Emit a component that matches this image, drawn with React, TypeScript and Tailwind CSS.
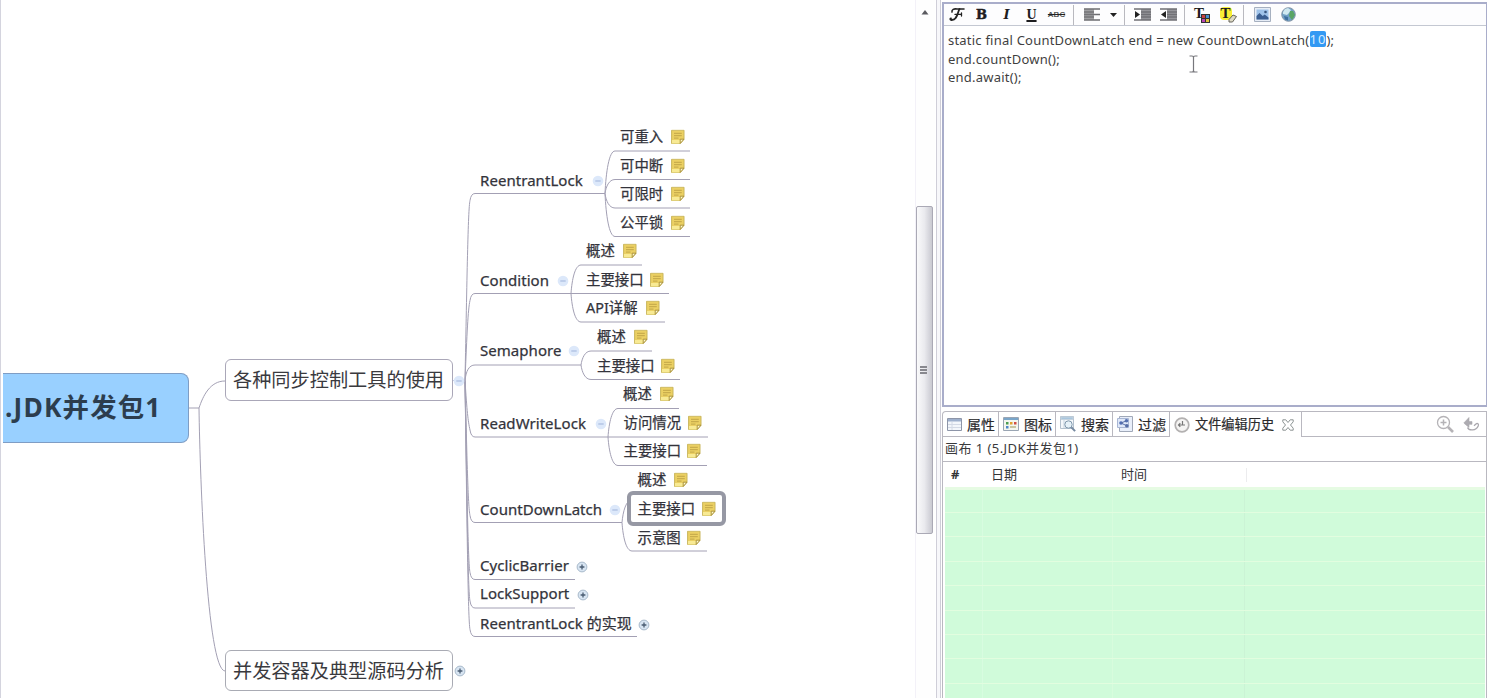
import React from "react";

const LINE = "#a3a0b4";

type Topic = {
  text: string;
  x: number;
  y: number;
  size: string;
  note?: number;
  toggle?: { x: number; open: boolean };
};

const BRANCH = "text-[15px] tracking-[0.05px]";
const LEAF = "text-[14.4px]";

const topics: Topic[] = [
  { text: "ReentrantLock", x: 480, y: 181, size: BRANCH, toggle: { x: 598, open: true } },
  { text: "可重入", x: 620, y: 138, size: LEAF, note: 671 },
  { text: "可中断", x: 620, y: 167, size: LEAF, note: 671 },
  { text: "可限时", x: 620, y: 195, size: LEAF, note: 671 },
  { text: "公平锁", x: 620, y: 224, size: LEAF, note: 671 },
  { text: "Condition", x: 480, y: 281, size: BRANCH, toggle: { x: 563, open: true } },
  { text: "概述", x: 586, y: 252, size: LEAF, note: 623 },
  { text: "主要接口", x: 586, y: 281, size: LEAF, note: 650 },
  { text: "API详解", x: 586, y: 309, size: LEAF, note: 646 },
  { text: "Semaphore", x: 480, y: 351, size: BRANCH, toggle: { x: 574, open: true } },
  { text: "概述", x: 597, y: 338, size: LEAF, note: 634 },
  { text: "主要接口", x: 597, y: 367, size: LEAF, note: 661 },
  { text: "ReadWriteLock", x: 480, y: 424, size: BRANCH, toggle: { x: 601, open: true } },
  { text: "概述", x: 623, y: 395, size: LEAF, note: 660 },
  { text: "访问情况", x: 623.5, y: 424, size: LEAF, note: 688 },
  { text: "主要接口", x: 623.5, y: 452, size: LEAF, note: 687 },
  { text: "CountDownLatch", x: 480, y: 510, size: BRANCH, toggle: { x: 615, open: true } },
  { text: "概述", x: 637.5, y: 481, size: LEAF, note: 674 },
  { text: "主要接口", x: 637.5, y: 510, size: LEAF, note: 702 },
  { text: "示意图", x: 637.5, y: 539, size: LEAF, note: 687 },
  { text: "CyclicBarrier", x: 480, y: 566, size: BRANCH, toggle: { x: 582, open: false } },
  { text: "LockSupport", x: 480, y: 594, size: BRANCH, toggle: { x: 583, open: false } },
  { text: "ReentrantLock 的实现", x: 480, y: 624, size: BRANCH, toggle: { x: 644, open: false } },
];

const trunkY = 380.5;
const branches = [
  { y: 193.5, end: 605 },
  { y: 293.5, end: 571 },
  { y: 365, end: 581 },
  { y: 437, end: 608 },
  { y: 522.5, end: 622 },
  { y: 579.5, end: 575 },
  { y: 608, end: 575 },
  { y: 636.5, end: 637 },
];
const forks = [
  { x: 605, y: 193.5, ends: [[151, 690], [179.5, 690], [208, 690], [236.5, 690]] },
  { x: 571, y: 293.5, ends: [[265, 642], [293.5, 669], [322, 665]] },
  { x: 581, y: 365, ends: [[351, 652], [379.5, 680]] },
  { x: 608, y: 437, ends: [[408.5, 679], [437, 708], [465.5, 707]] },
  { x: 622, y: 522.5, ends: [[500, 640], [551, 707]] },
];

function branchPath(y: number, end: number) {
  const gap = Math.abs(y - trunkY);
  if (gap < 30) return `M465 ${trunkY} C466 ${y + 6} 469 ${y} 475 ${y} H${end}`;
  const d = y < trunkY ? 1 : -1;
  return `M465 ${trunkY} C467 ${y + d * gap * 0.45} 468 ${y + d * 16} 470 ${y + d * 7} Q471 ${y} 475 ${y} H${end}`;
}
function forkPath(x: number, y: number, ty: number, end: number) {
  if (ty === y) return `M${x} ${y} H${end}`;
  return `M${x} ${y} C${x + 1} ${(y + ty) / 2} ${x + 4} ${ty} ${x + 10} ${ty} H${end}`;
}

function NoteIcon() {
  return (
    <svg width="14" height="15" viewBox="0 0 14 15" className="block">
      <path d="M.6.7H13v9L9.2 14H.6Z" fill="#ebd063" stroke="#c9b65c" />
      <path d="M1 10.5h8V14H1Z" fill="#f8ea94" />
      <path d="M3 3.8h7.8M3 6.2h7.8M3 8.6h4.5" stroke="#c2a648" strokeWidth="1" />
      <path d="M13 9.7H9.2V14Z" fill="#fffbd0" stroke="#a58b32" strokeWidth=".9" />
    </svg>
  );
}

function Toggle({ open }: { open: boolean }) {
  return open ? (
    <svg width="12" height="12" viewBox="0 0 12 12" className="block">
      <circle cx="6" cy="6" r="5.3" fill="#dce8fa" />
      <path d="M3.3 6h5.4" stroke="#9fb3da" />
    </svg>
  ) : (
    <svg width="12" height="12" viewBox="0 0 12 12" className="block">
      <circle cx="6" cy="6" r="4.9" fill="#d8e5f2" stroke="#a9bacb" />
      <path d="M3.6 6h4.8M6 3.6v4.8" stroke="#4a5c72" strokeWidth="1.3" />
    </svg>
  );
}

function At({ x, y, children }: { x: number; y: number; children: React.ReactNode }) {
  return (
    <div className="absolute -translate-y-1/2" style={{ left: x, top: y }}>
      {children}
    </div>
  );
}

function MindMap() {
  return (
    <main className="relative h-full w-[915px] shrink-0 overflow-hidden border-l border-[#d4d4de]">
      <div className="absolute -left-px top-0 h-full w-[915px]">
        <svg width="915" height="698" className="absolute left-0 top-0" fill="none" stroke={LINE}>
          <path d="M189 408H199M199 408C203 396 210 381 225 381M199 408C200 480 207 670 225 671" />
          <path d={`M453 ${trunkY}H465`} stroke="#c3cbe2" />
          {branches.map((b) => (
            <path key={b.y} d={branchPath(b.y, b.end)} />
          ))}
          {forks.map((f) =>
            f.ends.map(([ty, end]) => <path key={`${f.x}-${ty}`} d={forkPath(f.x, f.y, ty, end)} />)
          )}
        </svg>
        <div className="absolute left-[3px] top-[373px] flex h-[70px] w-[186px] items-center rounded-r-lg border border-l-0 border-[#7f9dc4] bg-[#99d0ff] pl-[2px] text-[26.4px] font-bold tracking-[1.15px] text-[#2c3d4e]">
          <span className="-mt-px whitespace-nowrap">.JDK并发包1</span>
        </div>
        <div className="absolute left-[225px] top-[359px] flex h-[42px] w-[228px] items-center rounded-md border border-[#aaa7b8] bg-white pl-[7px] text-[19.2px] text-[#3a3a3e]">
          <span className="whitespace-nowrap">各种同步控制工具的使用</span>
        </div>
        <div className="absolute left-[225px] top-[650px] flex h-[41px] w-[228px] items-center rounded-md border border-[#a9abb4] bg-white pl-[7px] text-[19.2px] text-[#3a3a3e]">
          <span className="mt-px whitespace-nowrap">并发容器及典型源码分析</span>
        </div>
        <At x={453} y={381}><Toggle open /></At>
        <At x={454} y={671}><Toggle open={false} /></At>
        <div className="absolute left-[627px] top-[491px] h-[35px] w-[99px] rounded-md border-4 border-[#9698a4] bg-white" />
        {topics.map((t) => (
          <React.Fragment key={`${t.x}-${t.y}`}>
            <At x={t.x} y={t.y - 1}>
              <span className={`${t.size} block whitespace-nowrap leading-5 text-[#33333b] [-webkit-text-stroke:0.25px_#33333b]`}>{t.text}</span>
            </At>
            {t.note !== undefined && <At x={t.note} y={t.y - 1}><NoteIcon /></At>}
            {t.toggle && <At x={t.toggle.x - 6} y={t.toggle.open ? t.y : t.y + 0.5}><Toggle open={t.toggle.open} /></At>}
          </React.Fragment>
        ))}
      </div>
    </main>
  );
}

function ScrollBar() {
  return (
    <div className="flex h-full w-[20px] shrink-0 flex-col border-l border-[#f3f1f8] bg-[#fefefe]">
      <div className="flex h-[206px] w-[18px] justify-center pt-[10px]">
        <svg width="8" height="5" viewBox="0 0 8 5"><path d="M4 0 7.5 4.5H.5Z" fill="#5b5b60" /></svg>
      </div>
      <div className="flex h-[328px] w-[17px] flex-col items-center justify-center gap-px rounded-[2px] border border-[#aaa9b5] bg-linear-to-r from-[#fafafb] via-[#eaeaee] to-[#c9c9d1] pr-[2px]">
        <div className="h-[2px] w-[7px] bg-[#88888e]" />
        <div className="h-[2px] w-[7px] bg-[#88888e]" />
        <div className="h-[2px] w-[7px] bg-[#88888e]" />
      </div>
    </div>
  );
}

function Cell({ className, children }: { className: string; children: React.ReactNode }) {
  return <div className={`${className} flex h-full shrink-0 items-center justify-center`}>{children}</div>;
}
function Sep() {
  return <div className="h-[20px] w-px bg-[#b9b9bf]" />;
}

function Toolbar() {
  return (
    <div className="flex h-[22px] shrink-0 items-center border-b border-[#c4c8d2] bg-[#fdfdfe] font-['Liberation_Serif',serif] text-[#1d1d1f]">
      <Cell className="w-[25px]">
        <svg width="16" height="15" viewBox="0 0 16 15" fill="none" stroke="#222" strokeLinecap="round">
          <path d="M3 5C2.5 2.5 5 1.6 8 2h7" strokeWidth="1.6" />
          <path d="M10.5 2C8.5 5 8.5 13.4 2.3 13 1 12.8 1 11.5 2 11.3" strokeWidth="1.8" />
          <path d="M6 7.4h6M12.5 6v3" strokeWidth="1.3" />
        </svg>
      </Cell>
      <Cell className="w-[25px]"><span className="font-['DejaVu_Serif',serif] text-[13px] font-bold [-webkit-text-stroke:0.5px]">B</span></Cell>
      <Cell className="w-[25px]"><span className="font-['DejaVu_Serif',serif] text-[13px] font-bold italic">I</span></Cell>
      <Cell className="w-[25px]"><span className="text-[14px] font-bold underline decoration-2">U</span></Cell>
      <Cell className="w-[25px]"><span className="font-['Liberation_Sans',sans-serif] text-[8px] font-bold text-[#555] line-through decoration-[#222]">ABC</span></Cell>
      <Cell className="w-[9px]"><Sep /></Cell>
      <Cell className="w-[28px]">
        <svg width="17" height="13" viewBox="0 0 17 13">
          <path d="M0 1h16M0 4h10M0 6.5h16M0 9h10M0 12h16" stroke="#6e6e72" strokeWidth="1.4" />
          <path d="M0 1h10v11H0Z" fill="#77777b" opacity=".7" />
        </svg>
      </Cell>
      <Cell className="w-[14px]"><svg width="7" height="4" viewBox="0 0 7 4"><path d="M0 0h7L3.5 4Z" fill="#222" /></svg></Cell>
      <Cell className="w-[9px]"><Sep /></Cell>
      <Cell className="w-[27px]">
        <svg width="17" height="13" viewBox="0 0 17 13">
          <path d="M7 1h10v11H7Z" fill="#96969b" />
          <path d="M0 1h17M7 4h10M7 6.5h10M7 9h10M0 12h17" stroke="#707075" strokeWidth="1.3" />
          <path d="M1 3v7l5-3.5Z" fill="#222" />
        </svg>
      </Cell>
      <Cell className="w-[25px]">
        <svg width="17" height="13" viewBox="0 0 17 13">
          <path d="M7 1h10v11H7Z" fill="#96969b" />
          <path d="M0 1h17M7 4h10M7 6.5h10M7 9h10M0 12h17" stroke="#707075" strokeWidth="1.3" />
          <path d="M6 3v7L1 6.5Z" fill="#222" />
        </svg>
      </Cell>
      <Cell className="w-[7px]"><Sep /></Cell>
      <Cell className="w-[28px]">
        <div className="relative h-[16px] w-[16px]">
          <span className="absolute left-0 top-0 text-[15px] font-bold leading-[13px]">T</span>
          <svg width="9" height="9" viewBox="0 0 9 9" className="absolute bottom-0 right-0">
            <path d="M0 0h9v9H0Z" fill="#333" /><path d="M1 1h3v3H1Z" fill="#c84141" /><path d="M5 1h3v3H5Z" fill="#468ed0" /><path d="M1 5h3v3H1Z" fill="#ba46b4" /><path d="M5 5h3v3H5Z" fill="#e2c33f" />
          </svg>
        </div>
      </Cell>
      <Cell className="w-[24px]">
        <div className="relative h-[16px] w-[17px]">
          <div className="absolute left-0 top-0 h-[13px] w-[12px] rounded-sm bg-[#f8ee35]" />
          <span className="absolute left-[1px] top-0 text-[15px] font-bold leading-[13px]">T</span>
          <svg width="9" height="9" viewBox="0 0 9 9" className="absolute bottom-0 right-0"><path d="M1 5.5 5 1 8.5 2.5 4.5 8 1 8Z" fill="#ddd9c5" stroke="#66645a" /></svg>
        </div>
      </Cell>
      <Cell className="w-[7px]"><Sep /></Cell>
      <Cell className="w-[30px]">
        <svg width="17" height="15" viewBox="0 0 17 15">
          <path d="M.5.5h16v14H.5Z" fill="#e7edf6" stroke="#a6b0c0" />
          <path d="M2.5 2.5h12v10h-12Z" fill="#9fc3ea" />
          <path d="M2.5 12.5V9l3-3 3.2 3 2-1.5 3.8 3v2Z" fill="#3b5f92" /><circle cx="11.5" cy="5" r="1.3" fill="#38557f" />
        </svg>
      </Cell>
      <Cell className="w-[22px]">
        <svg width="15" height="15" viewBox="0 0 15 15">
          <circle cx="7.5" cy="7.5" r="6.8" fill="#6f9fc4" stroke="#8596a8" />
          <path d="M2 5 4 2l3-1 3 2-2 3-2 2-4-1Z" fill="#cfe8f0" /><path d="m9 4 3 0 2 4-3 5-3-4Z" fill="#5aa565" /><path d="m3 9 4 1v3.5l-3-1Z" fill="#3d6e9f" />
        </svg>
      </Cell>
    </div>
  );
}

function NotesEditor() {
  return (
    <section className="relative mt-[2px] flex h-[405px] shrink-0 flex-col border-2 border-r border-[#a9adca] bg-white">
      <Toolbar />
      <div className="flex flex-col pl-[4px] pt-[5px] text-[13px] leading-[18.6px] tracking-[0.22px] text-[#3f3f3f]">
        <div className="whitespace-pre">
          static final CountDownLatch end = new CountDownLatch(
          <span className="inline-block h-[16px] rounded-[2px] bg-[#3399f3] align-top leading-[17px] tracking-[1px] text-[#d8ecff]">10</span>);
        </div>
        <div>end.countDown();</div>
        <div>end.await();</div>
      </div>
      <svg width="9" height="18" viewBox="0 0 9 18" className="absolute left-[245px] top-[51px]" fill="none" stroke="#77777c" strokeWidth="1.2">
        <path d="M.5 1H3Q4.5 1 4.5 2.5 4.5 1 6 1h2.5M4.5 2.5v13M.5 17H3q1.5 0 1.5-1.5Q4.5 17 6 17h2.5" />
      </svg>
    </section>
  );
}

function TableIcon() {
  return (
    <svg width="15" height="13" viewBox="0 0 15 13"><path d="M.5.5h14v12H.5Z" fill="#f3f6fb" stroke="#8d95a8" /><path d="M1 1h13v2.5H1Z" fill="#9eb0cd" /><path d="M1 6.5h13M1 9.5h13M5 4v8" stroke="#d4dae6" /></svg>
  );
}
function MarkerIcon() {
  return (
    <svg width="16" height="14" viewBox="0 0 16 14"><path d="M.5.5h15v13H.5Z" fill="#f4f6ee" stroke="#9aa5b3" /><path d="M1 1h14v2H1Z" fill="#79a5c9" /><path d="M3 5h2.5v2.5H3Z" fill="#4c9d52" /><path d="M7 5h2.5v2.5H7Z" fill="#e0a02f" /><path d="M11 5h2.5v2.5H11Z" fill="#d14d43" /><path d="M3 9h2.5v2.5H3Z" fill="#4f88c8" /><path d="M7 9h6v2H7Z" fill="#c8c4a0" /></svg>
  );
}
function SearchIcon() {
  return (
    <svg width="16" height="16" viewBox="0 0 16 16" fill="none"><path d="M.5.5h13v12H.5Z" fill="#f5f8fb" stroke="#b4c1ce" /><path d="M1 1h12v2.5H1ZM4 4v8" fill="#a9c6de" stroke="#c5d3df" /><circle cx="8.5" cy="8.5" r="3.7" fill="#e6f1f8" stroke="#7f97ab" /><path d="m11.3 11.3 3.8 3.8" stroke="#7689a0" strokeWidth="2" /></svg>
  );
}
function FilterIcon() {
  return (
    <svg width="16" height="16" viewBox="0 0 16 16" fill="none"><path d="M2.5.5h13v15h-13Z" fill="#e9effa" stroke="#a0a8b8" /><path d="M.5 2.5h11v9H.5Z" fill="#dfe8f8" stroke="#a8b6d4" /><circle cx="4" cy="7" r="1.8" fill="#4f6cb3" /><circle cx="9.5" cy="4.8" r="1.8" fill="#5672b2" /><circle cx="9.8" cy="9.8" r="1.8" fill="#556ca5" /><path d="M9.5 4.8 4 7l5.8 2.8" stroke="#5970a8" /></svg>
  );
}
function ClockIcon() {
  return (
    <svg width="16" height="16" viewBox="0 0 16 16" fill="none"><circle cx="8" cy="8" r="6.8" fill="#f5f4f3" stroke="#b3b1b1" strokeWidth="1.7" /><path d="M8.5 4v4H11M8.5 8H4.5M6.3 6.3 4.5 8l1.8 1.7" stroke="#777" strokeWidth="1.2" /></svg>
  );
}

function Tab({ width, icon, label }: { width: string; icon: React.ReactNode; label: string }) {
  return (
    <div className={`${width} flex h-full shrink-0 items-center gap-[5px] border-b border-r border-[#b9b8c0] pl-[4px] text-[14px] text-[#2a2a2c]`}>
      {icon}
      <span className="whitespace-nowrap [-webkit-text-stroke:0.2px]">{label}</span>
    </div>
  );
}

const historyRows = Array.from({ length: 9 }, (_, i) => i);

function HistoryPanel() {
  return (
    <section className="mt-[4px] flex min-h-0 flex-1 flex-col rounded-tl border-l border-r border-t border-[#b9b8c0] bg-white">
      <div className="flex h-[25px] shrink-0">
        <Tab width="w-[56px]" icon={<TableIcon />} label="属性" />
        <Tab width="w-[57px]" icon={<MarkerIcon />} label="图标" />
        <Tab width="w-[57px]" icon={<SearchIcon />} label="搜索" />
        <Tab width="w-[57px]" icon={<FilterIcon />} label="过滤" />
        <div className="flex h-full w-[132px] shrink-0 items-center gap-[5px] border-r border-[#b9b8c0] pl-[4px] text-[13.2px] text-[#2a2a2c]">
          <ClockIcon />
          <span className="whitespace-nowrap [-webkit-text-stroke:0.2px]">文件编辑历史</span>
          <svg width="12" height="12" viewBox="0 0 12 12" className="ml-[3px] shrink-0" fill="none" stroke="#8c9393">
            <path d="M.8.8h3L6 3.5 8.2.8h3v2L8.5 6l2.7 3.2v2h-3L6 8.5l-2.2 2.7h-3v-2L3.5 6 .8 2.8Z" />
          </svg>
        </div>
        <div className="flex flex-1 items-center justify-end gap-[9px] border-b border-[#b9b8c0] pr-[6px]">
          <svg width="18" height="18" viewBox="0 0 18 18" fill="none" stroke="#b5b3b7">
            <circle cx="7.5" cy="7.5" r="6" strokeWidth="1.3" /><path d="M4.5 7.5h6M7.5 4.5v6" strokeWidth="1.5" /><path d="m12 12 5 5" strokeWidth="2.6" />
          </svg>
          <svg width="17" height="16" viewBox="0 0 17 16" fill="none" stroke="#a9a7ad">
            <path d="M6 1.5.8 7 6 11.5V8.3h3V5.6H6Z" fill="#adabb1" strokeWidth=".6" /><path d="M4.5 11.5c1.5 3.5 8.5 3.5 10.7-1.5.8-2-.7-3.3-2.2-2L11 9.7" strokeWidth="1.3" />
          </svg>
        </div>
      </div>
      <div className="flex h-[25px] shrink-0 items-center border-b border-[#b9b8c0] pl-[2px] text-[13px] tracking-[0.45px] text-[#3a3a3c]">
        <span className="whitespace-nowrap">画布 1 (5.JDK并发包1)</span>
      </div>
      <div className="flex h-[25px] shrink-0 items-center pt-px text-[13px] text-[#343436]">
        <span className="w-[48px] shrink-0 pl-[8px] font-bold">#</span>
        <span className="w-[130px] shrink-0">日期</span>
        <span className="w-[125px] shrink-0">时间</span>
        <span className="h-[14px] w-px bg-[#ececee]" />
      </div>
      <div className="ml-[2px] mr-px min-h-0 flex-1 overflow-hidden bg-[#d0fbda]">
        <div className="h-[3px] bg-[#e6fbe3]" />
        {historyRows.map((row) => (
          <div key={row} className={`${row === 0 ? "h-[23px]" : "h-[24.4px]"} flex border-b border-[#e2fddf]`}>
            <div className="w-[38px] border-r border-[#d8fce0]" />
            <div className="w-[130px] border-r border-[#d8fcdd]" />
            <div className="w-[132px] border-r border-[#cbf3d5]" />
          </div>
        ))}
      </div>
    </section>
  );
}

export default function App() {
  return (
    <div className="flex h-[698px] w-[1487px] overflow-hidden bg-white font-['Noto_Sans','Noto_Sans_CJK_SC',sans-serif]">
      <MindMap />
      <ScrollBar />
      <div className="ml-[1px] mr-px h-full w-[5px] shrink-0 border-x border-[#cfced8] bg-[#f7f7fa]" />
      <aside className="flex h-full min-w-0 flex-1 flex-col">
        <NotesEditor />
        <HistoryPanel />
      </aside>
    </div>
  );
}
